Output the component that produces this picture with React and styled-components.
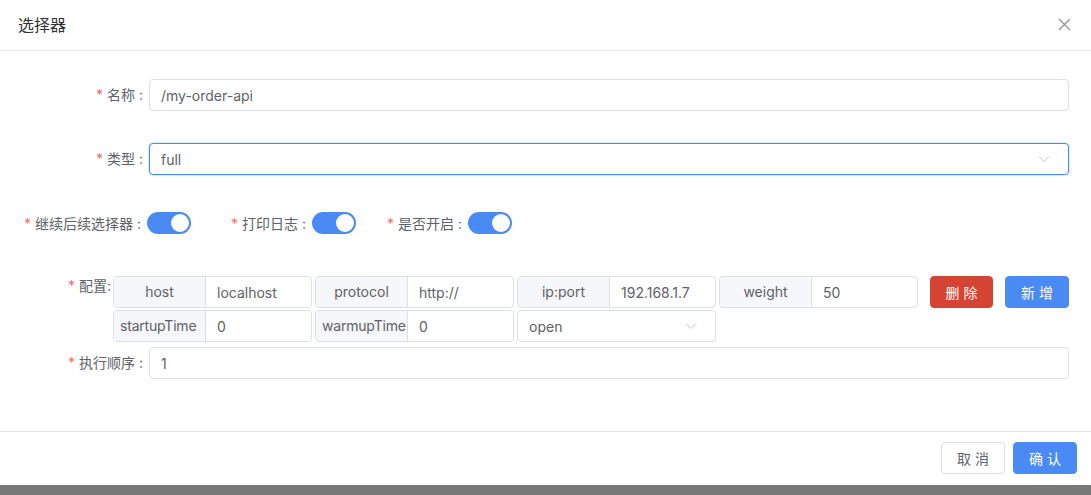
import React from 'react'
import styled, { createGlobalStyle } from 'styled-components'

const GlobalStyle = createGlobalStyle`
  html, body {
    margin: 0;
    padding: 0;
    background: #fff;
  }
  * {
    box-sizing: border-box;
  }
`

const FONT = `Inter, "Noto Sans CJK SC", sans-serif`
const BLUE = '#4a8af5'
const BORDER = '#dcdfe6'
const TEXT = '#606266'

const Page = styled.div`
  width: 1091px;
  height: 495px;
  background: #787878;
  font-family: ${FONT};
  font-size: 14px;
  color: ${TEXT};
`

const Dialog = styled.div`
  height: 485px;
  background: #fff;
  display: flex;
  flex-direction: column;
`

const Header = styled.div`
  height: 51px;
  flex-shrink: 0;
  display: flex;
  align-items: center;
  justify-content: space-between;
  padding: 0 20px 2px 18px;
  border-bottom: 1px solid #e4e7ed;
`

const Title = styled.div`
  font-size: 16px;
  color: #303133;
`

const CloseBtn = styled.div`
  width: 14px;
  height: 14px;
  display: flex;
  align-items: center;
  justify-content: center;
`

const Body = styled.div`
  flex: 1;
  padding-top: 28px;
`

const Row = styled.div`
  display: flex;
  align-items: ${p => (p.top ? 'flex-start' : 'center')};
  margin-bottom: ${p => p.mb}px;
`

const Label = styled.label`
  width: ${p => p.w}px;
  flex-shrink: 0;
  text-align: ${p => (p.left ? 'left' : 'right')};
  padding-left: ${p => p.pl || 0}px;
  padding-right: ${p => p.pr}px;
  padding-top: ${p => p.pt || 0}px;
  color: ${TEXT};
  white-space: pre;
  line-height: 20px;
`

const Star = styled.span`
  color: #f56c6c;
  margin-right: 4px;
`

const Input = styled.div`
  width: ${p => p.w || 920}px;
  height: 32px;
  border: 1px solid ${p => (p.focus ? BLUE : BORDER)};
  box-shadow: ${p => (p.focus ? '0 0 0 1px rgba(74,138,245,0.18)' : 'none')};
  border-radius: 4px;
  display: flex;
  align-items: center;
  justify-content: space-between;
  padding: 0 18px 0 11px;
  color: ${TEXT};
  background: #fff;
`

const Arrow = () => (
  <svg width="12" height="8" viewBox="0 0 12 8">
    <path d="M1 1.5 L6 6.5 L11 1.5" fill="none" stroke="#c0c4cc" strokeWidth="1" />
  </svg>
)

const SwitchRow = styled.div`
  display: flex;
  align-items: center;
  height: 32px;
  padding-left: 24px;
  margin-bottom: 37px;
`

const SwitchItem = styled.div`
  display: flex;
  align-items: center;
  margin-right: ${p => p.mr}px;
  white-space: pre;
`

const SwitchTrack = styled.div`
  width: 44px;
  height: 22px;
  border-radius: 11px;
  background: ${BLUE};
  margin-left: 6px;
  position: relative;
`

const Knob = styled.span`
  position: absolute;
  right: 2px;
  top: 2px;
  width: 18px;
  height: 18px;
  border-radius: 50%;
  background: #fff;
`

const ConfigGrid = styled.div`
  display: grid;
  grid-template-columns: repeat(4, 199px) auto auto;
  column-gap: 3px;
  row-gap: 2px;
  align-items: start;
`

const Group = styled.div`
  display: flex;
  height: 32px;
  border: 1px solid ${BORDER};
  border-radius: 4px;
  overflow: hidden;
`

const Prepend = styled.div`
  width: 92px;
  flex-shrink: 0;
  background: #f5f7fa;
  border-right: 1px solid ${BORDER};
  display: flex;
  align-items: center;
  justify-content: ${p => (p.over ? 'flex-start' : 'center')};
  padding: 0 ${p => (p.over ? 0 : 8)}px 1px ${p => (p.over ? 6 : 8)}px;
  letter-spacing: ${p => (p.over ? '-0.2px' : 'normal')};
  white-space: nowrap;
  overflow: hidden;
  color: ${TEXT};
`

const GroupValue = styled.div`
  flex: 1;
  display: flex;
  align-items: center;
  padding-left: 11px;
  white-space: nowrap;
  overflow: hidden;
`

const Button = styled.button`
  height: 32px;
  width: ${p => p.w || 64}px;
  border-radius: 4px;
  border: 1px solid ${p => (p.kind === 'danger' ? '#d44333' : p.kind === 'primary' ? BLUE : BORDER)};
  background: ${p => (p.kind === 'danger' ? '#d44333' : p.kind === 'primary' ? BLUE : '#fff')};
  color: ${p => (p.kind ? '#fff' : TEXT)};
  font-family: ${FONT};
  font-size: 14px;
  letter-spacing: 4px;
  text-indent: 4px;
  padding: 0;
  margin-left: ${p => p.ml || 0}px;
`

const Footer = styled.div`
  height: 54px;
  flex-shrink: 0;
  border-top: 1px solid #e4e7ed;
  display: flex;
  justify-content: flex-end;
  align-items: flex-start;
  padding: 10px 14px 0 0;
  gap: 8px;
`

const fields = [
  ['host', 'localhost'],
  ['protocol', 'http://'],
  ['ip:port', '192.168.1.7'],
  ['weight', '50'],
]

function ConfigGroup({ label, value }) {
  return (
    <Group>
      <Prepend over={label.length >= 10}>{label}</Prepend>
      <GroupValue>{value}</GroupValue>
    </Group>
  )
}

export default function App() {
  return (
    <Page>
      <GlobalStyle />
      <Dialog>
        <Header>
          <Title>选择器</Title>
          <CloseBtn>
            <svg width="13" height="13" viewBox="0 0 13 13">
              <path d="M1 1 L12 12 M12 1 L1 12" stroke="#909399" strokeWidth="1.3" />
            </svg>
          </CloseBtn>
        </Header>
        <Body>
          <Row mb={32}>
            <Label w={149} pr={6}><Star>*</Star>名称 :</Label>
            <Input>/my-order-api</Input>
          </Row>
          <Row mb={32}>
            <Label w={149} pr={6}><Star>*</Star>类型 :</Label>
            <Input focus>
              full
              <Arrow />
            </Input>
          </Row>
          <SwitchRow>
            <SwitchItem mr={40}>
              <Star>*</Star>继续后续选择器 :
              <SwitchTrack><Knob /></SwitchTrack>
            </SwitchItem>
            <SwitchItem mr={31}>
              <Star>*</Star>打印日志 :
              <SwitchTrack><Knob /></SwitchTrack>
            </SwitchItem>
            <SwitchItem mr={0}>
              <Star>*</Star>是否开启 :
              <SwitchTrack><Knob /></SwitchTrack>
            </SwitchItem>
          </SwitchRow>
          <Row top mb={5}>
            <Label w={113} left pl={68} pr={0} pt={0}><Star>*</Star>配置:</Label>
            <ConfigGrid>
              {fields.map(([l, v]) => (
                <ConfigGroup key={l} label={l} value={v} />
              ))}
              <Button kind="danger" ml={9} w={63}>删除</Button>
              <Button kind="primary" ml={9}>新增</Button>
              <ConfigGroup label="startupTime" value="0" />
              <ConfigGroup label="warmupTime" value="0" />
              <Input w={199}>
                open
                <Arrow />
              </Input>
            </ConfigGrid>
          </Row>
          <Row mb={0}>
            <Label w={149} pr={6}><Star>*</Star>执行顺序 :</Label>
            <Input>1</Input>
          </Row>
        </Body>
        <Footer>
          <Button>取消</Button>
          <Button kind="primary">确认</Button>
        </Footer>
      </Dialog>
    </Page>
  )
}
